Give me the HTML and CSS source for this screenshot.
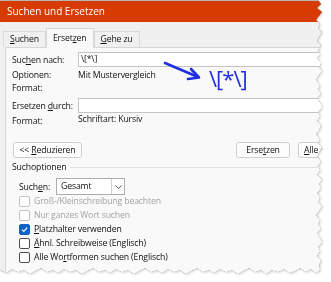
FILE: index.html
```html
<!DOCTYPE html>
<html lang="de">
<head>
  <meta charset="UTF-8" />
  <meta name="viewport" content="width=device-width, initial-scale=1.0"/>
  <title>Suchen und Ersetzen</title>
  <link rel="stylesheet" href="styles.css">
</head>
<body>
  <!-- Torn screenshot frame -->
  <div class="frame">
    <div class="dialog">
      <div class="titlebar">Suchen und Ersetzen</div>

      <!-- Tabs -->
      <div class="tabs">
        <div class="tab"><u>S</u>uchen</div>
        <div class="tab active">Erset<u>z</u>en</div>
        <div class="tab"><u>G</u>ehe zu</div>
      </div>

      <div class="panel">
        <div class="field-row">
          <span class="label">Suc<u>h</u>en nach:</span>
          <div class="input">\[*\]</div>
        </div>
        <div class="info-row">
          <span class="label">Optionen:</span>
          <span>Mit Mustervergleich</span>
        </div>
        <div class="info-row">
          <span class="label">Format:</span>
          <span></span>
        </div>
        <div class="field-row second">
          <span class="label">Ersetzen <u>d</u>urch:</span>
          <div class="input"></div>
        </div>
        <div class="info-row format-row">
          <span class="label">Format:</span>
          <span class="value-up">Schriftart: Kursiv</span>
        </div>

        <div class="buttons">
          <button class="btn btn-less">&lt;&lt; <u>R</u>eduzieren</button>
          <span class="spacer"></span>
          <button class="btn btn-replace">Erse<u>t</u>zen</button>
          <button class="btn btn-all"><u>A</u>lle ersetzen</button>
        </div>

        <div class="group-title"><span>Suchoptionen</span></div>

        <div class="select-row">
          <span>Such<u>e</u>n:</span>
          <div class="select">
            <span class="select-text">Gesamt</span>
            <span class="select-arrow">
              <svg width="7" height="4" viewBox="0 0 7 4"><path d="M0.5 0.5 L3.5 3.5 L6.5 0.5" fill="none" stroke="#555" stroke-width="1"/></svg>
            </span>
          </div>
        </div>

        <ul class="checks">
          <li class="disabled"><span class="box"></span>Groß-/Kleinschreibung beachten</li>
          <li class="disabled"><span class="box"></span>Nur ganzes Wort suchen</li>
          <li><span class="box checked"><svg width="9" height="9" viewBox="0 0 9 9"><path d="M2 4.6 L3.8 6.4 L7.2 2.6" fill="none" stroke="#fff" stroke-width="1.1"/></svg></span><u>P</u>latzhalter verwenden</li>
          <li><span class="box"></span><u>Ä</u>hnl. Schreibweise (Englisch)</li>
          <li><span class="box"></span>Alle Wo<u>r</u>tformen suchen (Englisch)</li>
        </ul>
      </div>

      <!-- Annotation over the dialog -->
      <svg class="note-arrow" width="44" height="26" viewBox="0 0 44 26">
        <path d="M4 4 L37 18" fill="none" stroke="#1f2ee0" stroke-width="2.6" stroke-linecap="round"/>
        <path d="M30 10 L38 18.5 L27 20" fill="none" stroke="#1f2ee0" stroke-width="2.6" stroke-linecap="round" stroke-linejoin="round"/>
      </svg>
      <div class="note-text">\[*\]</div>
    </div>
  </div>
</body>
</html>
```

FILE: styles.css
```css
/* Global Styles */
body {
  margin: 0;
  background: #ffffff;
  font-family: 'Open Sans', 'Noto Sans', sans-serif;
  font-size: 8.7px;
  letter-spacing: -0.15px;
  color: #111111;
  overflow: hidden;
}

u {
  text-decoration: underline;
  text-underline-offset: 1px;
}

/* Torn edge frame */
.frame {
  width: 331px;
  height: 282px;
  filter: drop-shadow(0 0 0.5px #555) drop-shadow(1px 1px 1px rgba(0, 0, 0, 0.15));
}

.dialog {
  position: relative;
  width: 331px;
  height: 282px;
  overflow: hidden;
  background: #f0f0f0;
  border-top: 1px solid #b5b5b5;
  box-sizing: border-box;
  clip-path: polygon(0 0, 318px 0, 321px 4px, 317px 8px, 322px 12px, 319px 16px, 316px 20px, 320px 24px, 318px 28px, 322px 32px, 319px 37px, 317px 41px, 321px 45px, 318px 50px, 320px 54px, 317px 58px, 321px 63px, 319px 67px, 322px 71px, 318px 76px, 316px 80px, 320px 85px, 318px 89px, 321px 94px, 317px 98px, 320px 103px, 322px 107px, 318px 112px, 320px 116px, 317px 121px, 321px 125px, 319px 130px, 316px 134px, 320px 139px, 318px 143px, 322px 148px, 319px 152px, 317px 157px, 321px 161px, 318px 166px, 320px 170px, 317px 175px, 322px 179px, 319px 184px, 321px 188px, 317px 193px, 320px 197px, 318px 202px, 322px 206px, 319px 211px, 316px 215px, 320px 220px, 318px 224px, 321px 229px, 317px 233px, 320px 238px, 322px 242px, 318px 247px, 320px 251px, 317px 256px, 321px 260px, 319px 265px, 320px 270px, 316px 273px, 311px 269px, 306px 272px, 300px 268px, 295px 271px, 289px 273px, 284px 269px, 278px 272px, 272px 270px, 266px 274px, 261px 270px, 255px 272px, 249px 268px, 243px 271px, 238px 274px, 232px 270px, 226px 272px, 220px 269px, 214px 273px, 209px 270px, 203px 272px, 197px 268px, 191px 271px, 186px 274px, 180px 270px, 174px 272px, 168px 269px, 162px 273px, 157px 270px, 151px 272px, 145px 268px, 139px 271px, 134px 274px, 128px 270px, 122px 272px, 116px 269px, 110px 273px, 105px 270px, 99px 272px, 93px 268px, 87px 271px, 82px 274px, 76px 270px, 70px 272px, 64px 269px, 58px 273px, 53px 270px, 47px 272px, 41px 268px, 35px 271px, 30px 274px, 24px 270px, 18px 272px, 12px 269px, 6px 273px, 0 270px);
}

/* Title bar */
.titlebar {
  height: 21px;
  background: #d83b01;
  color: #ffffff;
  font-size: 10px;
  letter-spacing: 0;
  line-height: 21px;
  padding-left: 7px;
}

/* Tabs */
.tabs {
  display: flex;
  align-items: flex-end;
  height: 25px;
  padding-left: 3px;
}

.tab {
  height: 16px;
  line-height: 15px;
  padding: 0 6px;
  border: 1px solid #d9d9d9;
  border-bottom: none;
  box-sizing: border-box;
  background: #f0f0f0;
}

.tab.active {
  z-index: 1;
  height: 20px;
  line-height: 19px;
  margin-bottom: -1px;
  padding: 0 6px;
  background: #f9f9f9;
  border-color: #d6d6d6;
}

/* Tab panel */
.panel {
  margin-left: 5px;
  height: 240px;
  background: #f9f9f9;
  border-left: 1px solid #d6d6d6;
  border-top: 1px solid #d6d6d6;
  padding: 4px 0 0 6px;
}

.field-row,
.info-row {
  display: grid;
  grid-template-columns: 66px 1fr;
  align-items: center;
}

.field-row {
  height: 15px;
}

.field-row.second {
  margin-top: 4px;
}

.info-row {
  height: 13px;
}

.field-row + .info-row {
  margin-top: 1px;
}

.format-row {
  margin-top: 5px;
}

.value-up {
  margin-top: -3px;
}

.input {
  height: 15px;
  line-height: 13px;
  background: #ffffff;
  border: 1px solid #c4c4c4;
  box-sizing: border-box;
  padding-left: 2px;
}

/* Buttons */
.buttons {
  display: flex;
  align-items: center;
  margin-top: 15px;
  padding-left: 1px;
}

.spacer {
  flex: 1;
}

.btn {
  flex: none;
  font-family: inherit;
  font-size: 8.7px;
  letter-spacing: -0.15px;
  color: #111111;
  height: 16px;
  padding: 0;
  background: #fdfdfd;
  border: 1px solid #cfcfcf;
  border-radius: 3px;
  line-height: 14px;
  white-space: nowrap;
}

.btn-less {
  width: 69px;
}

.btn-replace {
  width: 54px;
  margin-right: 8px;
}

.btn-all {
  width: 60px;
  text-align: left;
  padding-left: 5px;
  margin-right: -27px;
}

/* Options group */
.group-title {
  display: flex;
  align-items: center;
  height: 14px;
  margin-top: 2px;
}

.group-title::after {
  content: "";
  flex: 1;
  height: 1px;
  background: #e0e0e0;
  margin-left: 4px;
}

.select-row {
  display: flex;
  align-items: center;
  margin-top: 4px;
  padding-left: 7px;
}

.select-row > span {
  width: 37px;
}

.select {
  display: flex;
  width: 69px;
  height: 17px;
  background: #ffffff;
  border: 1px solid #adadad;
  box-sizing: border-box;
}

.select-text {
  flex: 1;
  line-height: 15px;
  padding-left: 4px;
}

.select-arrow {
  width: 12px;
  border-left: 1px solid #d0d0d0;
  display: flex;
  align-items: center;
  justify-content: center;
}

/* Checkboxes */
.checks {
  list-style: none;
  margin: -1px 0 0;
  padding: 0 0 0 7px;
}

.checks li {
  display: flex;
  align-items: center;
  height: 14px;
}

.box {
  width: 11px;
  height: 11px;
  box-sizing: border-box;
  border: 1px solid #4d4d4d;
  border-radius: 2px;
  background: #ffffff;
  margin-right: 4px;
  display: flex;
  align-items: center;
  justify-content: center;
}

.box.checked {
  background: #0f62c9;
  border-color: #0f62c9;
}

.checks li.disabled {
  color: #a3a3a3;
}

.checks li.disabled .box {
  border-color: #c2c2c2;
}

/* Annotation */
.note-arrow {
  position: absolute;
  left: 161px;
  top: 58px;
}

.note-text {
  position: absolute;
  left: 209px;
  top: 62px;
  font-size: 22px;
  letter-spacing: -1px;
  line-height: 30px;
  color: #1f2ee0;
}
```
